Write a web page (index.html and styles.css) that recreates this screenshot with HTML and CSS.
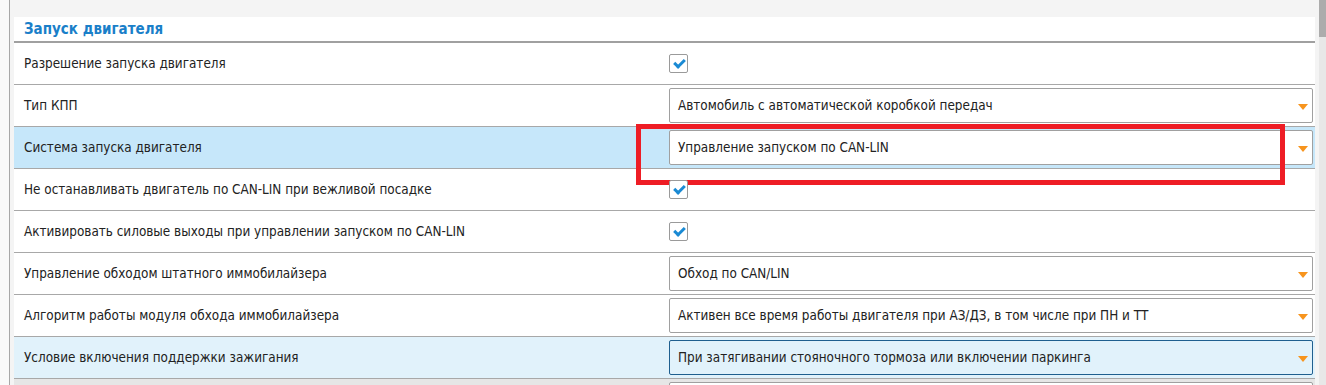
FILE: index.html
```html
<!DOCTYPE html>
<html lang="ru">
<head>
    <meta charset="UTF-8">
    <title>Запуск двигателя</title>
    <link rel="stylesheet" href="styles.css">
</head>
<body>
    <div class="page">
        <div class="edge"></div>
        <div class="content">
            <div class="panel">
                <div class="panel-title">Запуск двигателя</div>

                <div class="row">
                    <div class="label">Разрешение запуска двигателя</div>
                    <div class="control"><span class="check"></span></div>
                </div>
                <div class="row">
                    <div class="label">Тип КПП</div>
                    <div class="control"><div class="select">Автомобиль с автоматической коробкой передач</div></div>
                </div>
                <div class="row selected">
                    <div class="label">Система запуска двигателя</div>
                    <div class="control"><div class="select">Управление запуском по CAN-LIN</div></div>
                    <div class="mark"></div>
                </div>
                <div class="row">
                    <div class="label">Не останавливать двигатель по CAN-LIN при вежливой посадке</div>
                    <div class="control"><span class="check"></span></div>
                </div>
                <div class="row">
                    <div class="label">Активировать силовые выходы при управлении запуском по CAN-LIN</div>
                    <div class="control"><span class="check"></span></div>
                </div>
                <div class="row">
                    <div class="label">Управление обходом штатного иммобилайзера</div>
                    <div class="control"><div class="select">Обход по CAN/LIN</div></div>
                </div>
                <div class="row">
                    <div class="label">Алгоритм работы модуля обхода иммобилайзера</div>
                    <div class="control"><div class="select">Активен все время работы двигателя при АЗ/ДЗ, в том числе при ПН и ТТ</div></div>
                </div>
                <div class="row hover">
                    <div class="label">Условие включения поддержки зажигания</div>
                    <div class="control"><div class="select focus">При затягивании стояночного тормоза или включении паркинга</div></div>
                </div>
                <div class="row muted">
                    <div class="label"></div>
                    <div class="control"><div class="select"></div></div>
                </div>
            </div>
        </div>
        <div class="scrollbar"><div class="thumb"></div></div>
    </div>
</body>
</html>
```

FILE: styles.css
```css
body {
    margin: 0;
    font-family: "DejaVu Sans Condensed", "DejaVu Sans", sans-serif;
    font-size: 13.4px;
    color: #222;
    background-color: #fafafa;
    overflow: hidden;
}

.page {
    display: flex;
    height: 385px;
    overflow: hidden;
}

.edge {
    width: 9px;
    border-right: 1px solid #a8a8a8;
    background-color: #fafafa;
}

.content {
    flex: 1;
    background-color: #f4f4f4;
    padding: 17px 4px 0 4px;
}

.panel {
    background-color: #fff;
}

.panel-title {
    height: 24px;
    line-height: 25px;
    padding-left: 10px;
    font-weight: bold;
    font-size: 15px;
    color: #1a7fc9;
    border-bottom: 2px solid #a0a0a0;
}

.row {
    position: relative;
    display: flex;
    align-items: center;
    height: 41px;
    border-bottom: 1px solid #a8a8a8;
}

.row.selected {
    background-color: #c6e7fa;
}

.row.hover {
    background-color: #e1f2fb;
}

.row.muted {
    background-color: #e6e6e6;
}

.label {
    width: 645px;
    padding-left: 10px;
}

.control {
    flex: 1;
    padding-right: 2px;
}

.check {
    display: block;
    width: 17px;
    height: 17px;
    border: 1px solid #9a9a9a;
    border-radius: 2px;
    background-color: #fff;
    position: relative;
}

/* tick */
.check::after {
    content: "";
    position: absolute;
    left: 6px;
    top: 2px;
    width: 4px;
    height: 8px;
    border-right: 3px solid #1a8ad4;
    border-bottom: 3px solid #1a8ad4;
    transform: rotate(45deg);
}

.select {
    position: relative;
    height: 33px;
    line-height: 33px;
    padding-left: 8px;
    border: 1px solid #a0a0a0;
    border-radius: 2px;
    background-color: #fff;
}

.select::after {
    content: "";
    position: absolute;
    right: 4px;
    top: 15px;
    border-left: 5px solid transparent;
    border-right: 5px solid transparent;
    border-top: 6px solid #f7941d;
}

.select.focus {
    border-color: #1f5f8f;
    background-color: #e1f2fb;
}

/* red highlight frame over the row */
.mark {
    position: absolute;
    left: 622px;
    top: -3px;
    width: 639px;
    height: 51px;
    border: 5px solid #ee1d25;
}

.scrollbar {
    width: 7px;
    background-color: #e8e8e8;
}

.thumb {
    height: 37px;
    background-color: #acacac;
}
```
